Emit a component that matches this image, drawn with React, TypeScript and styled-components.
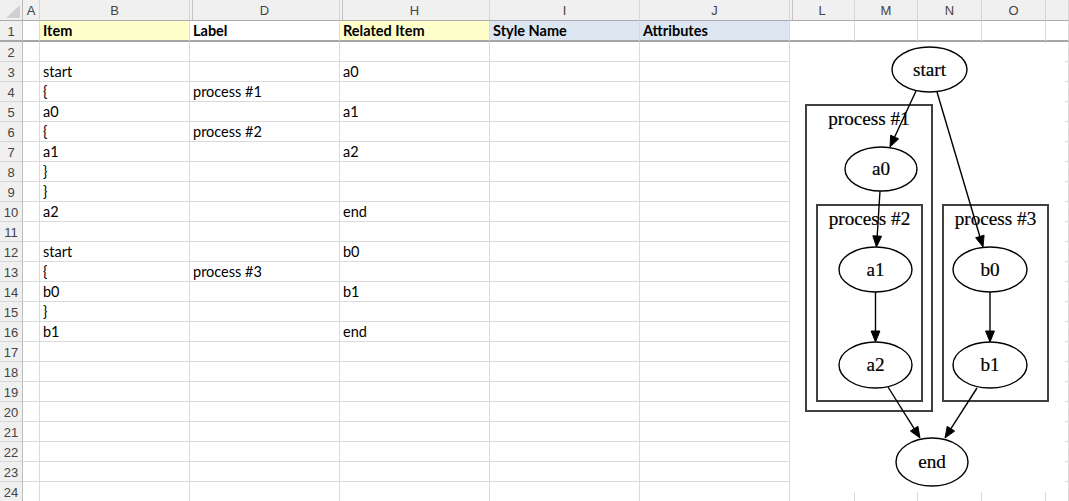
import React from "react";
import styled, { createGlobalStyle } from "styled-components";

const GlobalStyle = createGlobalStyle`
  html, body {
    margin: 0;
    padding: 0;
    background: #ffffff;
    overflow: hidden;
  }
`;

const COLS = [
  { key: "A", w: 17 },
  { key: "B", w: 150 },
  { key: "D", w: 150, hiddenBefore: true },
  { key: "H", w: 150, hiddenBefore: true },
  { key: "I", w: 150 },
  { key: "J", w: 150 },
  { key: "L", w: 65, hiddenBefore: true },
  { key: "M", w: 63 },
  { key: "N", w: 64 },
  { key: "O", w: 64 },
  { key: "", w: 0 },
];

// row number -> cells by column letter
const DATA: Record<number, Record<string, string>> = {
  1: { B: "Item", D: "Label", H: "Related Item", I: "Style Name", J: "Attributes" },
  3: { B: "start", H: "a0" },
  4: { B: "{", D: "process #1" },
  5: { B: "a0", H: "a1" },
  6: { B: "{", D: "process #2" },
  7: { B: "a1", H: "a2" },
  8: { B: "}" },
  9: { B: "}" },
  10: { B: "a2", H: "end" },
  12: { B: "start", H: "b0" },
  13: { B: "{", D: "process #3" },
  14: { B: "b0", H: "b1" },
  15: { B: "}" },
  16: { B: "b1", H: "end" },
};

const HEAD_FILL: Record<string, string> = {
  B: "#ffffcc",
  H: "#ffffcc",
  I: "#dce6f1",
  J: "#dce6f1",
};

const Page = styled.div`
  position: relative;
  width: 1069px;
  height: 501px;
  overflow: hidden;
`;

const Sheet = styled.div`
  display: grid;
  grid-template-columns: 23px ${COLS.map((c) => (c.w ? `${c.w}px` : "1fr")).join(" ")};
  grid-template-rows: 21px 21px;
  grid-auto-rows: 20px;
`;

const Corner = styled.div`
  box-sizing: border-box;
  background: #f0f0f0;
  border-right: 1px solid #bdbdbd;
  border-bottom: 1px solid #ababab;
  display: flex;
  align-items: flex-end;
  justify-content: flex-end;
  padding: 0 2px 2px 0;
`;

const CornerMark = styled.div`
  width: 14px;
  height: 13px;
  background: #d0d0d0;
  clip-path: polygon(100% 0, 100% 100%, 0 100%);
`;

const ColHeader = styled.div<{ $hiddenBefore?: boolean }>`
  box-sizing: border-box;
  background: #f0f0f0;
  border-right: 1px solid #d6d6d6;
  border-bottom: 1px solid #ababab;
  display: flex;
  align-items: center;
  justify-content: center;
  font-family: "Liberation Sans", Arial, sans-serif;
  font-size: 13px;
  color: #444444;
  box-shadow: ${(p) =>
    p.$hiddenBefore ? "inset 2px 0 0 #f0f0f0, inset 3px 0 0 #c4c4c4" : "none"};
`;

const RowHeader = styled.div<{ $first?: boolean }>`
  box-sizing: border-box;
  background: #f0f0f0;
  border-right: 1px solid #bdbdbd;
  border-bottom: ${(p) => (p.$first ? "2px solid #a6a6a6" : "1px solid #d6d6d6")};
  display: flex;
  align-items: center;
  justify-content: center;
  padding-top: 1px;
  font-family: "Liberation Sans", Arial, sans-serif;
  font-size: 13px;
  color: #444444;
`;

const Cell = styled.div<{ $fill?: string; $bold?: boolean; $first?: boolean }>`
  box-sizing: border-box;
  background: ${(p) => p.$fill || "#ffffff"};
  border-right: 1px solid #dadada;
  border-bottom: ${(p) => (p.$first ? "2px solid #a6a6a6" : "1px solid #dadada")};
  padding: 1px 3px 0;
  font-family: Lato, "Liberation Sans", sans-serif;
  font-size: 14.5px;
  font-weight: ${(p) => (p.$bold ? 700 : 400)};
  line-height: 18px;
  color: #000000;
  white-space: nowrap;
  overflow: hidden;
`;

const Chart = styled.div`
  position: absolute;
  left: 790px;
  top: 43px;
  width: 275px;
  height: 449px;
  background: #ffffff;
`;

const NodeText = styled.text`
  font-family: "Liberation Serif", "Times New Roman", serif;
  font-size: 19.2px;
  fill: #000000;
  stroke: #000000;
  stroke-width: 0.2px;
`;

type Pt = [number, number];

function Edge({ from, to }: { from: Pt; to: Pt }) {
  const [x1, y1] = from;
  const [x2, y2] = to;
  const len = Math.hypot(x2 - x1, y2 - y1);
  const ux = (x2 - x1) / len;
  const uy = (y2 - y1) / len;
  const L = 11;
  const W = 4.4;
  const bx = x2 - ux * L;
  const by = y2 - uy * L;
  const pts = `${x2},${y2} ${bx - uy * W},${by + ux * W} ${bx + uy * W},${by - ux * W}`;
  return (
    <g>
      <line x1={x1} y1={y1} x2={bx} y2={by} stroke="#000" strokeWidth={1.4} />
      <polygon points={pts} fill="#000" stroke="#000" strokeWidth={1} />
    </g>
  );
}

function Node({ cx, cy, rx, ry, label }: { cx: number; cy: number; rx: number; ry: number; label: string }) {
  return (
    <g>
      <ellipse cx={cx} cy={cy} rx={rx} ry={ry} fill="#fff" stroke="#000" strokeWidth={1.4} />
      <NodeText x={cx} y={cy + 6} textAnchor="middle">
        {label}
      </NodeText>
    </g>
  );
}

function Cluster({ x, y, w, h, label }: { x: number; y: number; w: number; h: number; label: string }) {
  return (
    <g>
      <rect x={x} y={y} width={w} height={h} fill="none" stroke="#404040" strokeWidth={2} />
      <NodeText x={x + w / 2} y={y + 19.5} textAnchor="middle">
        {label}
      </NodeText>
    </g>
  );
}

function Graph() {
  return (
    <Chart>
      <svg width="275" height="449" viewBox="790 43 275 449">
        <Cluster x={806} y={105} w={126} h={306} label="process #1" />
        <Cluster x={817} y={205} w={105} h={196} label="process #2" />
        <Cluster x={943} y={205} w={105} h={196} label="process #3" />

        <Node cx={929.5} cy={69.5} rx={37.5} ry={22.5} label="start" />
        <Node cx={881} cy={169} rx={36} ry={22} label="a0" />
        <Node cx={875.5} cy={269.5} rx={36.5} ry={22.5} label="a1" />
        <Node cx={875.5} cy={365} rx={36.5} ry={23} label="a2" />
        <Node cx={990} cy={269.5} rx={37} ry={22.5} label="b0" />
        <Node cx={990} cy={365} rx={37} ry={23} label="b1" />
        <Node cx={932} cy={462} rx={36} ry={24} label="end" />

        <Edge from={[916, 91]} to={[890, 147]} />
        <Edge from={[937, 92]} to={[983, 247]} />
        <Edge from={[880, 191]} to={[876.5, 247]} />
        <Edge from={[875.5, 292]} to={[875.5, 342]} />
        <Edge from={[990, 292]} to={[990, 342]} />
        <Edge from={[888, 387]} to={[920, 438]} />
        <Edge from={[977, 388]} to={[945, 438]} />
      </svg>
    </Chart>
  );
}

export default function App() {
  const rows = Array.from({ length: 24 }, (_, i) => i + 1);
  return (
    <Page>
      <GlobalStyle />
      <Sheet>
        <Corner>
          <CornerMark />
        </Corner>
        {COLS.map((c, i) => (
          <ColHeader key={`h${i}`} $hiddenBefore={c.hiddenBefore}>
            {c.key}
          </ColHeader>
        ))}
        {rows.map((r) => (
          <React.Fragment key={r}>
            <RowHeader $first={r === 1}>{r}</RowHeader>
            {COLS.map((c, i) => (
              <Cell
                key={`${r}-${i}`}
                $first={r === 1}
                $bold={r === 1}
                $fill={r === 1 ? HEAD_FILL[c.key] : undefined}
              >
                {DATA[r]?.[c.key] ?? ""}
              </Cell>
            ))}
          </React.Fragment>
        ))}
      </Sheet>
      <Graph />
    </Page>
  );
}
